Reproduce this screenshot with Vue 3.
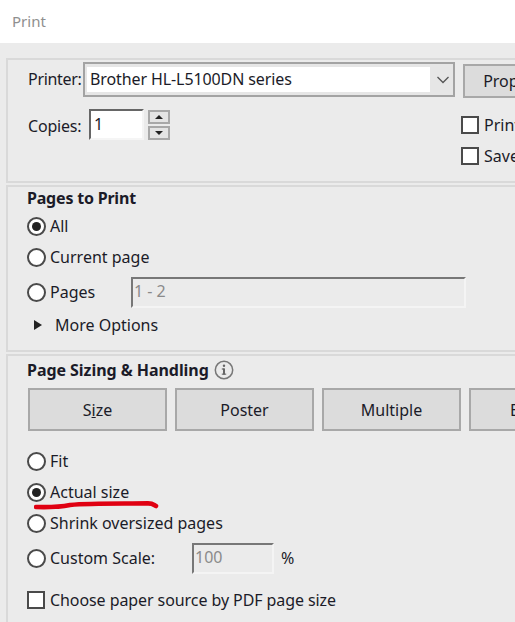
<script setup>
const buttons = ['Poster', 'Multiple', 'Booklet']
</script>

<template>
  <div class="dialog">
    <header class="title">Print</header>
    <main class="body">
      <section class="group printer-group">
        <div class="printer-row">
          <span class="printer-label">Printer:</span>
          <div class="select">
            <span class="select-value">Brother HL-L5100DN series</span>
            <svg class="chevron" width="14" height="8" viewBox="0 0 14 8"><path d="M1.5 1 L7 6.5 L12.5 1" fill="none" stroke="#555" stroke-width="1.3" /></svg>
          </div>
          <button class="btn prop">Properties</button>
        </div>
        <div class="copies-row">
          <span class="copies-label">Copies:</span>
          <div class="copies-input">1</div>
          <div class="spinner">
            <div class="spin"><i class="arrow up"></i></div>
            <div class="spin"><i class="arrow down"></i></div>
          </div>
          <div class="checks">
            <label class="check-row"><span class="checkbox"></span><span>Print in grayscale</span></label>
            <label class="check-row"><span class="checkbox"></span><span>Save ink/toner</span></label>
          </div>
        </div>
      </section>

      <section class="group pages-group">
        <h2 class="heading">Pages to Print</h2>
        <div class="radio-row all"><span class="radio on"></span><span>All</span></div>
        <div class="radio-row current"><span class="radio"></span><span>Current page</span></div>
        <div class="radio-row pages">
          <span class="radio"></span><span class="pages-label">Pages</span>
          <div class="disabled-input wide">1 - 2</div>
        </div>
        <div class="more"><i class="tri"></i><span>More Options</span></div>
      </section>

      <section class="group sizing-group">
        <div class="heading-row">
          <h2 class="heading sizing-heading">Page Sizing &amp; Handling</h2>
          <svg class="info" width="20" height="20" viewBox="0 0 20 20">
            <circle cx="10" cy="10" r="8.7" fill="none" stroke="#777" stroke-width="1.5" />
            <rect x="9" y="8.4" width="2" height="6.2" fill="#666" />
            <rect x="7.8" y="8.4" width="2" height="1.2" fill="#666" />
            <rect x="7.8" y="13.6" width="4.4" height="1.1" fill="#666" />
            <circle cx="10" cy="5.8" r="1.2" fill="#666" />
          </svg>
        </div>
        <div class="tabs">
          <button class="btn tab">S<u>i</u>ze</button>
          <button v-for="b in buttons" :key="b" class="btn tab">{{ b }}</button>
        </div>
        <div class="radio-row fit"><span class="radio"></span><span>Fit</span></div>
        <div class="radio-row actual">
          <span class="radio on"></span><span>Actual size</span>
          <svg class="scribble" width="130" height="10" viewBox="0 0 130 10">
            <path d="M2 7 C18 7.5 26 7 36 5 C58 3 90 3.8 114 3.4 C119 3.4 120 5 122 6" fill="none" stroke="#e00012" stroke-width="4.6" stroke-linecap="round" />
          </svg>
        </div>
        <div class="radio-row shrink"><span class="radio"></span><span>Shrink oversized pages</span></div>
        <div class="radio-row custom">
          <span class="radio"></span><span class="custom-label">Custom Scale:</span>
          <div class="disabled-input scale">100</div>
          <span class="percent">%</span>
        </div>
        <div class="radio-row source"><span class="checkbox"></span><span class="source-label">Choose paper source by PDF page size</span></div>
      </section>
    </main>
  </div>
</template>

<style scoped>
.dialog {
  width: 515px;
  height: 622px;
  overflow: hidden;
  background: #fff;
  color: #1b1b28;
  font-family: "Noto Sans", "Open Sans", sans-serif;
  font-size: 16px;
}
.title {
  height: 43px;
  padding-left: 12px;
  line-height: 42px;
  color: #8f8f8f;
  font-size: 15px;
}
.body {
  height: 579px;
  background: #ebebeb;
  padding: 15px 0 0 6px;
  box-sizing: border-box;
}
.group {
  width: 620px;
  border: 2px solid #d9d9d9;
  border-right: 0;
  border-bottom: 0;
  box-sizing: border-box;
}
.printer-group {
  height: 125px;
  border-bottom: 2px solid #d9d9d9;
  padding: 2px 0 0 20px;
  margin-bottom: 2px;
}
.pages-group {
  height: 167px;
  border-bottom: 2px solid #d9d9d9;
  padding-left: 19px;
  margin-bottom: 2px;
}
.sizing-group {
  padding-left: 19px;
  height: 300px;
}
.printer-row {
  display: flex;
  align-items: flex-start;
}
.printer-label {
  line-height: 34px;
  width: 55px;
  flex: none;
  letter-spacing: -0.3px;
}
.select {
  width: 372px;
  height: 35px;
  flex: none;
  box-sizing: border-box;
  border: 2px solid #a3a3a3;
  display: flex;
  align-items: center;
  background: #e6e6e6;
}
.select-value {
  width: 343px;
  height: 25px;
  flex: none;
  box-sizing: border-box;
  background: #fff;
  margin-left: 2px;
  padding-left: 3px;
  line-height: 24px;
  letter-spacing: -0.1px;
  white-space: nowrap;
}
.chevron {
  margin-left: 6px;
  flex: none;
}
.btn {
  font: inherit;
  color: inherit;
  background: #dcdcdc;
  border: 2px solid #a8a8a8;
  box-sizing: border-box;
  padding: 0;
  white-space: nowrap;
}
.prop {
  width: 118px;
  height: 34px;
  margin: 2px 0 0 8px;
  flex: none;
}
.copies-row {
  display: flex;
  align-items: flex-start;
  margin-top: 11px;
}
.copies-label {
  width: 61px;
  flex: none;
  line-height: 34px;
  letter-spacing: -0.2px;
}
.copies-input {
  width: 55px;
  height: 31px;
  flex: none;
  box-sizing: border-box;
  background: #fff;
  border: 2px solid #f5f5f5;
  border-top-color: #666;
  border-left-color: #666;
  padding-left: 3px;
  line-height: 26px;
}
.spinner {
  width: 22px;
  flex: none;
  margin: 1px 0 0 4px;
  display: flex;
  flex-direction: column;
  gap: 2px;
}
.spin {
  height: 14px;
  box-sizing: border-box;
  border: 2px solid #a8a8a8;
  background: #e4e4e4;
  display: flex;
  align-items: center;
  justify-content: center;
}
.arrow {
  width: 0;
  height: 0;
  border-left: 4px solid transparent;
  border-right: 4px solid transparent;
}
.arrow.up {
  border-bottom: 4px solid #222;
}
.arrow.down {
  border-top: 4px solid #222;
}
.checks {
  margin: 7px 0 0 291px;
  display: flex;
  flex-direction: column;
  gap: 13px;
  flex: none;
}
.check-row {
  display: flex;
  align-items: center;
  gap: 5px;
  height: 18px;
  white-space: nowrap;
}
.checkbox {
  width: 18px;
  height: 18px;
  box-sizing: border-box;
  border: 2px solid #4a4a4a;
  background: #fff;
  flex: none;
}
.heading {
  margin: 0;
  font-size: 16px;
  font-weight: 700;
  letter-spacing: -0.2px;
  white-space: nowrap;
}
.sizing-heading {
  letter-spacing: -0.05px;
}
.pages-group .heading {
  line-height: 22px;
}
.radio-row {
  display: flex;
  align-items: center;
  height: 20px;
  white-space: nowrap;
  position: relative;
}
.radio {
  width: 19px;
  height: 19px;
  box-sizing: border-box;
  border: 2px solid #4a4a4a;
  border-radius: 50%;
  background: #fff;
  flex: none;
  margin-right: 4px;
  display: flex;
  align-items: center;
  justify-content: center;
}
.radio.on::after {
  content: "";
  width: 9px;
  height: 9px;
  border-radius: 50%;
  background: #222;
}
.all {
  margin-top: 7px;
}
.current {
  margin-top: 11px;
}
.pages {
  margin-top: 15px;
}
.pages-label {
  width: 81px;
  flex: none;
}
.disabled-input {
  box-sizing: border-box;
  border: 2px solid #f4f4f4;
  border-top-color: #777;
  border-left-color: #777;
  color: #8a8a8a;
  padding-left: 1px;
  flex: none;
  background: #ebebeb;
}
.wide {
  width: 335px;
  height: 31px;
  line-height: 25px;
}
.more {
  display: flex;
  align-items: center;
  margin: 13px 0 0 7px;
  height: 20px;
}
.tri {
  width: 0;
  height: 0;
  border-top: 5px solid transparent;
  border-bottom: 5px solid transparent;
  border-left: 8px solid #222;
  margin-right: 13px;
}
.heading-row {
  display: flex;
  align-items: center;
  gap: 5px;
  height: 28px;
}
.tabs {
  display: flex;
  gap: 8px;
  margin: 4px 0 0 1px;
}
.tab {
  width: 139px;
  height: 43px;
  flex: none;
}
.fit {
  margin-top: 20px;
}
.actual {
  margin-top: 11px;
}
.scribble {
  position: absolute;
  left: 7px;
  top: 18px;
}
.shrink {
  margin-top: 11px;
}
.custom {
  margin-top: 15px;
}
.custom-label {
  width: 142px;
  flex: none;
}
.scale {
  width: 82px;
  height: 31px;
  line-height: 25px;
}
.percent {
  margin-left: 7px;
}
.source {
  margin-top: 22px;
}
.source .checkbox {
  margin-right: 5px;
}
.source-label {
  letter-spacing: -0.08px;
}
</style>

<style>
html, body {
  margin: 0;
  overflow: hidden;
}
</style>
